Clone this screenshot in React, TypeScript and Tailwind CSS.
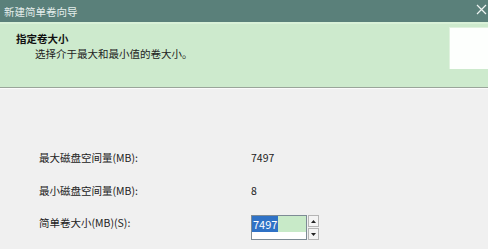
import React from 'react';

const font = { fontFamily: '"Noto Sans CJK SC", "Microsoft YaHei", sans-serif' };

const rows = [
  { label: '最大磁盘空间量(MB):', value: '7497' },
  { label: '最小磁盘空间量(MB):', value: '8' },
];

const App: React.FC = () => {
  return (
    <div className="w-[488px] h-[249px] overflow-hidden bg-[#f0f0f0] flex flex-col text-[10.5px] leading-[15px] text-[#1a1a1a]" style={font}>
      {/* title bar */}
      <div className="h-[22px] bg-[#5a807a] flex items-center justify-between pl-[4px] pr-[1px]">
        <span className="text-[#e4eeec]">新建简单卷向导</span>
        <svg width="11" height="11" viewBox="0 0 11 11" className="mb-[3px]">
          <path d="M1 1 L10 10 M10 1 L1 10" stroke="#eef4f2" strokeWidth="1.2" />
        </svg>
      </div>

      {/* header */}
      <div className="h-[66px] bg-[#cdeacd] border-t-[2px] border-[#d9f1d8] border-b border-b-[#9aa59a] flex justify-between">
        <div className="pt-[7px] pl-[16px]">
          <div className="font-bold text-[#111]">指定卷大小</div>
          <div className="pl-[19px] text-[#222]">选择介于最大和最小值的卷大小。</div>
        </div>
        <div className="w-[39px] h-[42px] mt-[3px] bg-[#fdfffd] border-l border-t border-[#e0f2df]" />
      </div>
      <div className="h-px bg-[#fbfbfb]" />

      {/* body */}
      <div className="flex flex-col pl-[39px] pt-[61px] gap-[18px]">
        {rows.map((r) => (
          <div key={r.label} className="flex h-[15px] items-center">
            <span className="w-[212px] text-[#222]">{r.label}</span>
            <span className="text-[#222]">{r.value}</span>
          </div>
        ))}
        <div className="flex items-start -mt-[1px]">
          <span className="w-[212px] text-[#222]">简单卷大小(MB)(S):</span>
          <div className="flex items-start gap-[1px]">
            <div className="w-[56px] h-[25px] border border-[#7d8b95] bg-white flex flex-col">
              <div className="flex h-[16px] bg-[#c8eac8]">
                <span className="bg-[#2f72c6] text-white px-[1px] leading-[16px] text-[11px]">7497</span>
              </div>
            </div>
            <div className="w-[11px] h-[25px] flex flex-col gap-[1px]">
              <div className="flex-1 bg-[#f4f4f4] border border-[#b5b5b5] flex items-center justify-center">
                <svg width="5" height="3" viewBox="0 0 5 3"><path d="M2.5 0 L5 3 L0 3 Z" fill="#222" /></svg>
              </div>
              <div className="flex-1 bg-[#f4f4f4] border border-[#b5b5b5] flex items-center justify-center">
                <svg width="5" height="3" viewBox="0 0 5 3"><path d="M0 0 L5 0 L2.5 3 Z" fill="#222" /></svg>
              </div>
            </div>
          </div>
        </div>
      </div>
    </div>
  );
};

export default App;
